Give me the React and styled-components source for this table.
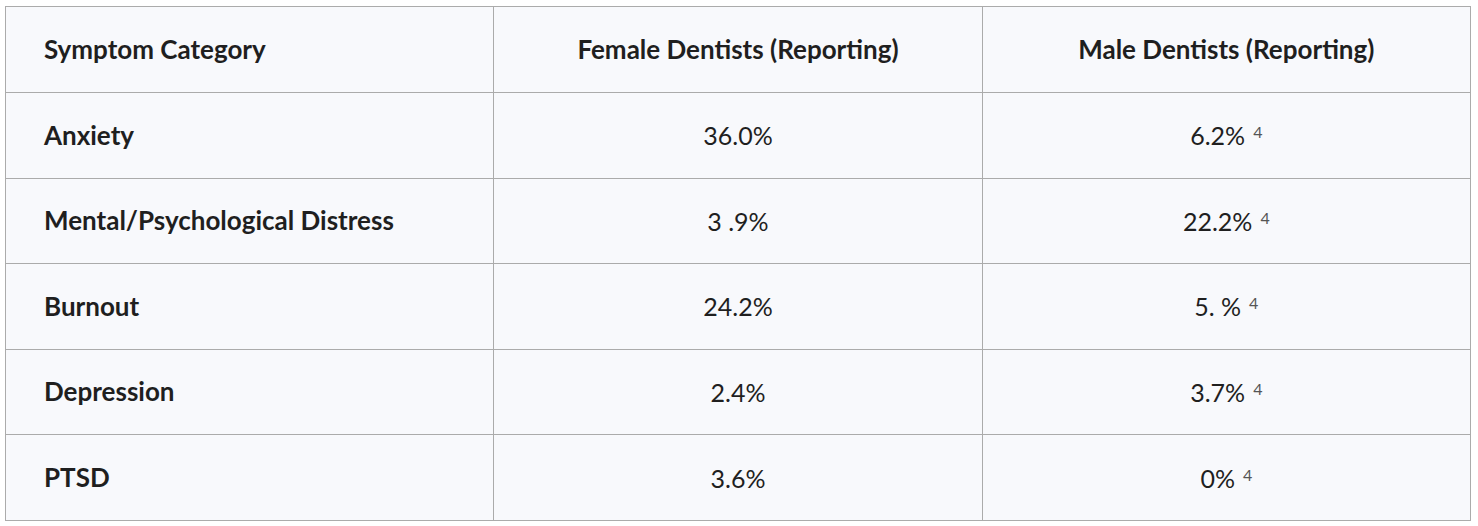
import React from 'react'
import styled, { createGlobalStyle } from 'styled-components'

const GlobalStyle = createGlobalStyle`
  body {
    margin: 0;
    background: #ffffff;
    font-family: Lato, "Noto Sans", sans-serif;
    color: #1f1f1f;
  }
`

const Page = styled.div`
  padding: 6px 8px 6px 5px;
`

const Table = styled.table`
  width: 1466px;
  border-collapse: collapse;
  table-layout: fixed;
  background: #f8f9fc;
  border: 1px solid #ababab;
`

const Row = styled.tr`
  height: ${({ $head }) => ($head ? '86px' : '85.6px')};
  border-bottom: 1px solid #ababab;
`

const Cell = styled.td`
  border-right: 1px solid #ababab;
  padding: 0 38px;
  font-size: ${({ $bold }) => ($bold ? '26px' : '25px')};
  font-weight: ${({ $bold }) => ($bold ? 700 : 400)};
  text-align: ${({ $center }) => ($center ? 'center' : 'left')};
  color: #1f1f1f;
  vertical-align: middle;
  line-height: 1.2;
`

const Ref = styled.span`
  display: inline-block;
  font-size: 16px;
  color: #555555;
  margin-left: 8px;
  transform: translateY(-7px);
  line-height: 1;
`

const rows = [
  ['Anxiety', '36.0%', '6.2%'],
  ['Mental/Psychological Distress', '3 .9%', '22.2%'],
  ['Burnout', '24.2%', '5. %'],
  ['Depression', '2.4%', '3.7%'],
  ['PTSD', '3.6%', '0%'],
]

const App = () => {
  return (
    <Page>
      <GlobalStyle />
      <Table>
        <thead>
          <Row $head>
            <Cell as="th" $bold>Symptom Category</Cell>
            <Cell as="th" $bold $center>Female Dentists (Reporting)</Cell>
            <Cell as="th" $bold $center>Male Dentists (Reporting)</Cell>
          </Row>
        </thead>
        <tbody>
          {rows.map(([name, female, male]) => (
            <Row key={name}>
              <Cell $bold>{name}</Cell>
              <Cell $center>{female}</Cell>
              <Cell $center>
                {male}
                <Ref>4</Ref>
              </Cell>
            </Row>
          ))}
        </tbody>
      </Table>
    </Page>
  )
}

export default App
